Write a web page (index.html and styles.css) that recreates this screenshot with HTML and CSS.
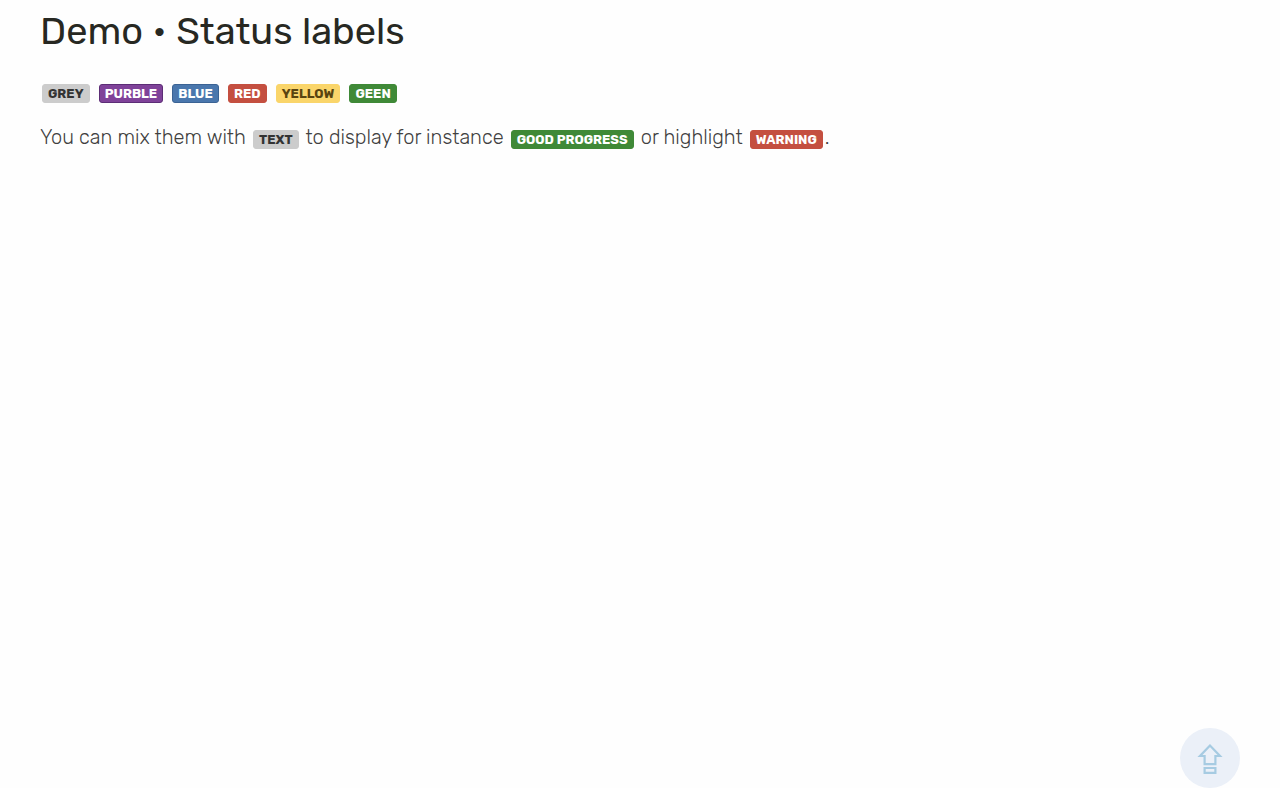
FILE: index.html
```html
<!DOCTYPE html>
<html lang="en">
<head>
<meta charset="utf-8">
<meta name="viewport" content="width=device-width, initial-scale=1">
<title>Demo • Status labels</title>
<link rel="stylesheet" href="styles.css">
</head>
<body>
<main class="page">
  <h1 class="title">Demo • Status labels</h1>
  <p class="text">
    <span class="label grey">GREY</span>
    <span class="label purple">PURBLE</span>
    <span class="label blue">BLUE</span>
    <span class="label red">RED</span>
    <span class="label yellow">YELLOW</span>
    <span class="label green">GEEN</span>
  </p>
  <p class="text">You can mix them with <span class="label grey">TEXT</span> to display for instance <span class="label green">GOOD PROGRESS</span> or highlight <span class="label red">WARNING</span>.</p>
</main>
<button class="to-top" type="button" aria-label="Back to top">
  <svg width="26" height="32" viewBox="0 0 26 32" fill="none" stroke="#a6cbe2" stroke-width="2.2" aria-hidden="true">
    <path d="M13 3.5 L3 14 H7.6 V22.2 H18.4 V14 H23 Z"/>
    <path d="M7.6 26 H18.4 V30.8 H7.6 Z"/>
  </svg>
</button>
</body>
</html>
```
FILE: styles.css
```css
* { box-sizing: border-box; }
body {
  margin: 0;
  background: #fefefe;
  color: #404040;
  font-family: Rubik, Roboto, "Open Sans", sans-serif;
}
.page { padding: 6px 40px 40px; }
.title {
  margin: 0 0 19px;
  font-size: 38px;
  line-height: 50px;
  font-weight: 400;
  color: #272822;
}
.text {
  margin: 0 0 14px;
  font-size: 20px;
  line-height: 32px;
  font-weight: 300;
}
.label {
  display: inline-block;
  margin: 0 2px;
  padding: 0 5px;
  border: 1px solid;
  border-radius: 3px;
  font-size: 13px;
  line-height: 17px;
  font-weight: 700;
}
.grey { background: #ccc; border-color: #ccc; color: #333; }
.purple { background: #7f4299; border-color: #5c2d76; color: #fff; }
.blue { background: #4a77ad; border-color: #3b6394; color: #fff; }
.red { background: #c44f40; border-color: #c44f40; color: #fff; }
.yellow { background: #fad56a; border-color: #fad56a; color: #594410; }
.green { background: #3f8937; border-color: #3f8937; color: #fff; }
.to-top {
  position: fixed;
  right: 40px;
  bottom: 0;
  display: grid;
  place-items: center;
  width: 60px;
  height: 60px;
  padding: 0;
  border: 0;
  border-radius: 50%;
  background: #ebf0f8;
  cursor: pointer;
}
```
